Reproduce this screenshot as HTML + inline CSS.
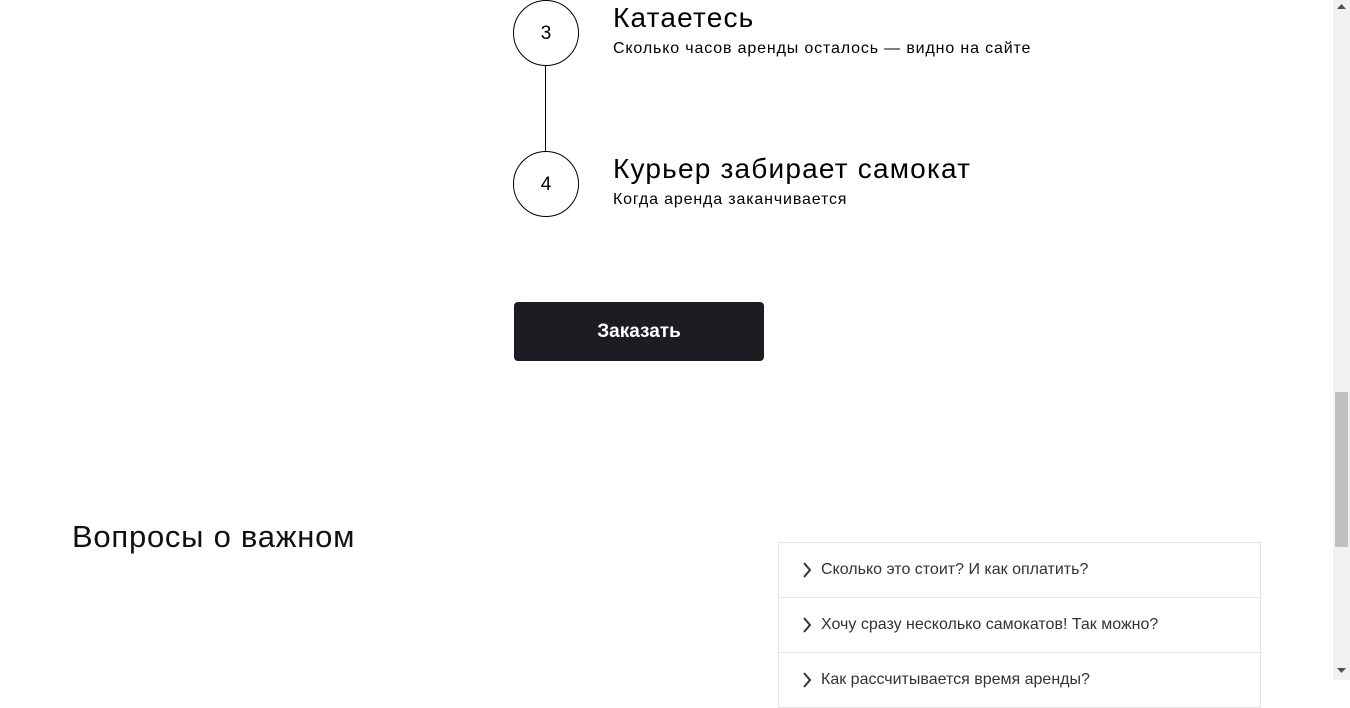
<!DOCTYPE html>
<html><head><meta charset="utf-8"><style>
body{margin:0;width:1350px;height:680px;overflow:hidden;background:#fff;font-family:"Liberation Sans",sans-serif;color:#000;position:relative}
.c{position:absolute;left:513px;width:64px;height:64px;border:1px solid #000;border-radius:50%;text-align:center;line-height:66px;font-size:19px}
.t{position:absolute;left:613px;font-size:28px;white-space:nowrap;letter-spacing:1.2px}
.s{position:absolute;left:613px;font-size:16px;white-space:nowrap;letter-spacing:0.85px}
.btn{position:absolute;left:514px;top:302px;width:250px;height:59px;background:#1c1c22;border-radius:4px;color:#fff;font-size:19px;font-weight:bold;text-align:center;line-height:60px}
.acc{position:absolute;left:778px;top:542px;width:481px;border:1px solid #e6e6e6;border-bottom:none}
.row{height:54px;border-bottom:1px solid #e6e6e6;position:relative;font-size:16px;color:#333;line-height:54px;padding-left:42px;white-space:nowrap;overflow:hidden}
.row svg{position:absolute;left:23px;top:19px}
.sb{position:absolute;left:1333px;top:0;width:17px;height:680px;background:#f1f1f1;z-index:5}
.th{position:absolute;left:2px;top:392px;width:13px;height:155px;background:#c1c1c1}
</style></head><body>
<div class="c" style="top:0">3</div>
<div style="position:absolute;left:545px;top:66px;width:1px;height:86px;background:#000"></div>
<div class="c" style="top:151px">4</div>
<div class="t" style="top:2px">Катаетесь</div>
<div class="s" style="top:40px">Сколько часов аренды осталось — видно на сайте</div>
<div class="t" style="top:153px">Курьер забирает самокат</div>
<div class="s" style="top:191px">Когда аренда заканчивается</div>
<div class="btn">Заказать</div>
<div style="position:absolute;left:72px;top:519px;font-size:31px;color:#111;letter-spacing:0.75px">Вопросы о важном</div>
<div class="acc">
<div class="row"><svg width="10" height="16"><path d="M2 1l6 7-6 7" stroke="#333" stroke-width="2" fill="none"/></svg>Сколько это стоит? И как оплатить?</div>
<div class="row"><svg width="10" height="16"><path d="M2 1l6 7-6 7" stroke="#333" stroke-width="2" fill="none"/></svg>Хочу сразу несколько самокатов! Так можно?</div>
<div class="row"><svg width="10" height="16"><path d="M2 1l6 7-6 7" stroke="#333" stroke-width="2" fill="none"/></svg>Как рассчитывается время аренды?</div>
</div>
<div class="sb"><div class="th"></div>
<svg style="position:absolute;left:4px;top:4px" width="9" height="6"><path d="M0 5h9L4.5 0z" fill="#505050"/></svg>
<svg style="position:absolute;left:4px;top:668px" width="9" height="6"><path d="M0 0h9L4.5 5z" fill="#505050"/></svg>
</div>
</body></html>
